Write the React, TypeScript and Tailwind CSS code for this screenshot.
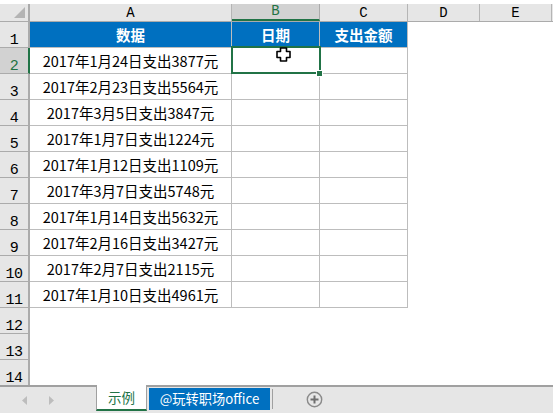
import React from 'react';

const rows = [
  '2017年1月24日支出3877元',
  '2017年2月23日支出5564元',
  '2017年3月5日支出3847元',
  '2017年1月7日支出1224元',
  '2017年1月12日支出1109元',
  '2017年3月7日支出5748元',
  '2017年1月14日支出5632元',
  '2017年2月16日支出3427元',
  '2017年2月7日支出2115元',
  '2017年1月10日支出4961元',
];

const cjk = "font-['Noto_Sans_CJK_SC',sans-serif]";

const ColHead = ({ label, width, active }: { label: string; width: string; active?: boolean }) => (
  <div
    className={`${width} h-full flex items-end justify-center border-r font-['Liberation_Mono',monospace] text-[14px] leading-[15px] ${
      active
        ? 'bg-[#d2d2d2] border-[#ababab] text-[#1f7244] border-b-2 border-b-[#217346]'
        : 'border-[#b5b5b5] text-black'
    }`}
  >
    {label}
  </div>
);

const RowHead = ({ n, active }: { n: number; active?: boolean }) => (
  <div
    className={`w-[30px] h-full shrink-0 flex items-end justify-center border-b font-['Liberation_Mono',monospace] text-[15px] tracking-[-0.5px] leading-[13px] ${
      active
        ? 'bg-[#d2d2d2] text-[#1f7244] border-b-[#ababab] border-r-2 border-r-[#217346]'
        : 'bg-[#e6e6e6] text-black border-b-[#ababab] border-r-2 border-r-[#ababab]'
    }`}
  >
    {n}
  </div>
);

export default function App() {
  return (
    <div className={`w-[553px] h-[413px] flex flex-col overflow-hidden bg-white relative ${cjk}`}>
      {/* column headers */}
      <div className="mt-[4px] h-[18px] shrink-0 flex bg-[#e6e6e6] border-b border-[#ababab]">
        <div className="w-[30px] h-full border-r-2 border-[#ababab] flex items-end justify-end pr-[3px] pb-[3px]">
          <svg width="11" height="11" viewBox="0 0 11 11">
            <path d="M11 0V11H0Z" fill="#b4b4b4" />
          </svg>
        </div>
        <ColHead label="A" width="w-[202px]" />
        <ColHead label="B" width="w-[88px]" active />
        <ColHead label="C" width="w-[88px]" />
        <ColHead label="D" width="w-[72px]" />
        <ColHead label="E" width="w-[72px]" />
      </div>

      {/* sheet */}
      <div className="flex-1 min-h-0 overflow-hidden">
        <div className="h-[26px] flex">
          <RowHead n={1} />
          <div className="w-[202px] flex items-center justify-center bg-[#0070c0] text-white font-bold text-[14.5px] border-b border-r border-[#bdbdbd]">
            数据
          </div>
          <div className="w-[88px] flex items-center justify-center bg-[#0070c0] text-white font-bold text-[14.5px] border-b border-r border-[#bdbdbd]">
            日期
          </div>
          <div className="w-[88px] flex items-center justify-center bg-[#0070c0] text-white font-bold text-[14.5px] border-b border-r border-[#bdbdbd]">
            支出金额
          </div>
        </div>
        {rows.map((text, i) => (
          <div key={i} className="h-[26px] flex">
            <RowHead n={i + 2} active={i === 0} />
            <div className="w-[202px] flex items-center justify-center text-black text-[14.5px] border-b border-r border-[#bdbdbd]">
              {text}
            </div>
            <div className="w-[88px] border-b border-r border-[#bdbdbd]" />
            <div className="w-[88px] border-b border-r border-[#bdbdbd]" />
          </div>
        ))}
        {[12, 13, 14].map((n) => (
          <div key={n} className="h-[26px] flex">
            <RowHead n={n} />
          </div>
        ))}
      </div>

      {/* sheet tabs */}
      <div className="h-[28px] shrink-0 flex bg-[#e6e6e6] border-t-2 border-[#a0a0a0]">
        <div className="w-[96px] flex items-center pl-[22px] gap-[20px]">
          <svg width="6" height="9" viewBox="0 0 6 9">
            <path d="M5 0V9L0 4.5Z" fill="#bdbdbd" />
          </svg>
          <svg width="6" height="9" viewBox="0 0 6 9">
            <path d="M1 0V9L6 4.5Z" fill="#bdbdbd" />
          </svg>
        </div>
        <div className="w-[51px] -mt-[2px] h-[26px] flex items-center justify-center bg-white border-x border-[#a0a0a0] border-b-2 border-b-[#217346] text-[#217346] text-[13.5px]">
          示例
        </div>
        <div className="ml-[2px] mt-[1px] w-[121px] h-[22px] flex items-center justify-center bg-[#0070c0] text-white text-[13.25px]">
          @玩转职场office
        </div>
        <div className="ml-[2px] mt-[2px] w-px h-[20px] bg-[#a0a0a0]" />
        <svg className="ml-[33px] mt-[4px]" width="17" height="17" viewBox="0 0 17 17">
          <circle cx="8.5" cy="8.5" r="7.2" fill="none" stroke="#8a8a8a" strokeWidth="1.4" />
          <path d="M8.5 4.5V12.5M4.5 8.5H12.5" stroke="#6e6e6e" strokeWidth="2" />
        </svg>
      </div>

      {/* selected cell */}
      <div className="absolute left-[231px] top-[46px] w-[90px] h-[28px] border-2 border-[#217346]" />
      <div className="absolute left-[316px] top-[70px] w-[7px] h-[7px] bg-[#217346] border border-white" />

      {/* cursor */}
      <svg className="absolute left-[276px] top-[47px]" width="15" height="15" viewBox="0 0 15 15">
        <path
          d="M4.5 1H10.5V4.5H14V10.5H10.5V14H4.5V10.5H1V4.5H4.5Z"
          fill="#fff"
          stroke="#000"
          strokeWidth="1.6"
          strokeLinejoin="round"
        />
      </svg>
    </div>
  );
}
